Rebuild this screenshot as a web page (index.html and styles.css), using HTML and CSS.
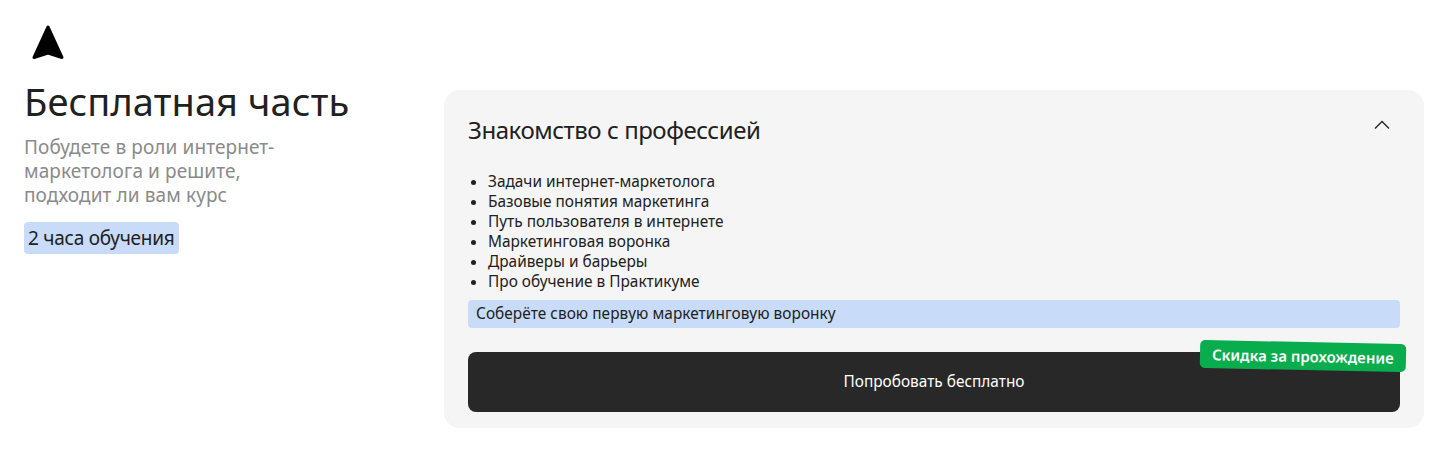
FILE: index.html
```html
<!DOCTYPE html>
<html lang="ru">

<head>
    <meta charset="utf-8">
    <meta name="viewport" content="width=device-width, initial-scale=1.0">
    <title>Бесплатная часть</title>
    <link rel="stylesheet" href="styles.css">
</head>

<body>
    <section class="part">
        <div class="intro">
            <svg class="logo" width="40" height="40" viewBox="0 0 40 40">
                <path d="M20 5 L34 35.500 L20 31 L6 35.500 Z" fill="#000" stroke="#000" stroke-width="3" stroke-linejoin="round"/>
            </svg>
            <h1>Бесплатная часть</h1>
            <p class="lead">Побудете в роли интернет-<br>маркетолога и решите,<br>подходит ли вам курс</p>
            <span class="duration">2 часа обучения</span>
        </div>

        <article class="card">
            <header class="card-head">
                <h2>Знакомство с профессией</h2>
                <svg class="chevron" width="16" height="10" viewBox="0 0 16 10">
                    <path d="M1 8.500 L8 1.500 L15 8.500" fill="none" stroke="#222" stroke-width="1.300"/>
                </svg>
            </header>
            <ul class="topics">
                <li>Задачи интернет-маркетолога</li>
                <li>Базовые понятия маркетинга</li>
                <li>Путь пользователя в интернете</li>
                <li>Маркетинговая воронка</li>
                <li>Драйверы и барьеры</li>
                <li>Про обучение в Практикуме</li>
            </ul>
            <p class="result">Соберёте свою первую маркетинговую воронку</p>
            <div class="action">
                <button class="try">Попробовать бесплатно</button>
                <span class="discount">Скидка за прохождение</span>
            </div>
        </article>
    </section>
</body>

</html>
```

FILE: styles.css
```css
body {
    margin: 0;
    background: #fff;
    color: #212121;
    font-family: "Noto Sans", sans-serif;
}

.part {
    display: grid;
    grid-template-columns: 420px 980px;
    padding: 22px 15px 23px 24px;
}

.logo {
    display: block;
    margin-bottom: 17px;
    margin-left: 4px;
}

h1 {
    margin: 0;
    font-size: 38px;
    line-height: 44px;
    font-weight: 400;
    letter-spacing: 0.1px;
}

.lead {
    margin: 12px 0 15px;
    font-size: 19px;
    line-height: 24px;
    letter-spacing: 0.1px;
    color: #8a8a8a;
}

.duration {
    display: inline-block;
    padding: 4px;
    font-size: 19px;
    line-height: 24px;
    letter-spacing: -0.25px;
    background: #c8dcfa;
    border-radius: 4px;
}

.card {
    margin-top: 68px;
    padding: 24px 24px 16px;
    background: #f5f5f5;
    border-radius: 16px;
}

.card-head {
    display: flex;
    justify-content: space-between;
    align-items: flex-start;
}

h2 {
    margin: 0;
    font-size: 24px;
    line-height: 32px;
    font-weight: 400;
    letter-spacing: -0.45px;
}

.chevron {
    margin: 6px 10px 0 0;
}

.topics {
    margin: 26px 0 8px;
    padding-left: 20px;
    font-size: 15.400px;
    line-height: 20px;
}

.result {
    margin: 0 0 24px;
    padding: 4px 8px;
    font-size: 15.400px;
    line-height: 20px;
    letter-spacing: 0.05px;
    background: #c8dcfa;
    border-radius: 4px;
}

.action {
    position: relative;
}

.try {
    display: block;
    width: 100%;
    height: 60px;
    padding-bottom: 2px;
    border: 0;
    border-radius: 8px;
    background: #282828;
    color: #fff;
    font-family: "Noto Sans", sans-serif;
    font-size: 15.400px;
}

.discount {
    position: absolute;
    top: -10px;
    right: -6px;
    padding: 4px 12px;
    font-size: 15px;
    line-height: 20px;
    font-weight: 600;
    color: #fff;
    background: #0aad4d;
    border-radius: 5px;
    transform: rotate(1.100deg);
}
```
